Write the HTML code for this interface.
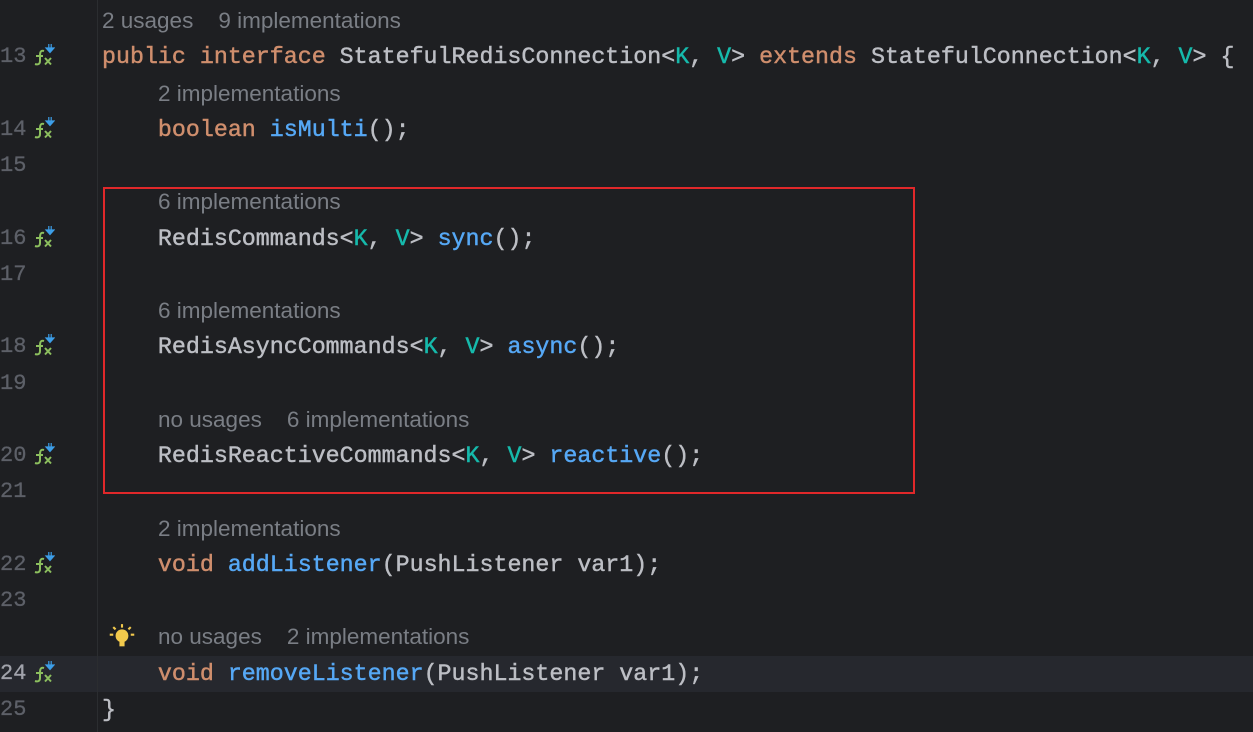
<!DOCTYPE html>
<html><head><meta charset="utf-8"><style>
html,body{margin:0;padding:0;background:#1e1f22;width:1253px;height:732px;overflow:hidden;position:relative}
.row{position:absolute;left:0;width:1253px;height:36px;line-height:36px}
.num{position:absolute;left:0;width:26px;text-align:right;font-family:"Liberation Mono",monospace;font-size:22px;color:#5d6068;-webkit-text-stroke:0.3px #5d6068}
.code{position:absolute;left:102px;font-family:"Liberation Mono",monospace;font-size:23.3px;color:#bcbec4;white-space:pre;-webkit-text-stroke:0.45px currentColor}
.hint{position:absolute;left:102px;font-family:"Liberation Sans",sans-serif;font-size:22.5px;color:#7a7e85;white-space:pre}
.k{color:#cf8e6d}.m{color:#56a8f5}.t{color:#16baac}
.fx{position:absolute;left:33px;top:5px}
.gut{position:absolute;left:97px;top:0;width:1px;height:732px;background:#2b2d30}
.cur{background:#26282e}
.box{position:absolute;left:103px;top:187px;width:808px;height:303px;border:2px solid #e0282a}
</style></head><body>
<div class="row cur" style="top:656px"></div>
<div class="gut"></div>
<svg width="0" height="0" style="position:absolute"><defs><g id="fx"><path d="M11 7 C8 6 7 8 7 11 L7 17 C7 20 5 21 2 20 M3 12 H10" stroke="#8cbf5e" stroke-width="2" fill="none"/><path d="M12 14 L18 20.5 M18 14 L12 20.5" stroke="#8cbf5e" stroke-width="2"/><path d="M13 4 H21 L17 8.5 Z M15.8 0 V5 M18.2 0 V5" fill="#3d9ee8" stroke="#3d9ee8" stroke-width="1.2"/></g></defs></svg>
<div class="row" style="top:3px"><span class="hint">2 usages    9 implementations</span></div>
<div class="row" style="top:39px"><span class="num">13</span><svg class="fx" width="22" height="24"><use href="#fx"/></svg><span class="code"><span class="k">public interface</span> StatefulRedisConnection&lt;<span class="t">K</span>, <span class="t">V</span>&gt; <span class="k">extends</span> StatefulConnection&lt;<span class="t">K</span>, <span class="t">V</span>&gt; {</span></div>
<div class="row" style="top:76px"><span class="hint" style="left:158px">2 implementations</span></div>
<div class="row" style="top:112px"><span class="num">14</span><svg class="fx" width="22" height="24"><use href="#fx"/></svg><span class="code">    <span class="k">boolean</span> <span class="m">isMulti</span>();</span></div>
<div class="row" style="top:148px"><span class="num">15</span></div>
<div class="row" style="top:184px"><span class="hint" style="left:158px">6 implementations</span></div>
<div class="row" style="top:221px"><span class="num">16</span><svg class="fx" width="22" height="24"><use href="#fx"/></svg><span class="code">    RedisCommands&lt;<span class="t">K</span>, <span class="t">V</span>&gt; <span class="m">sync</span>();</span></div>
<div class="row" style="top:257px"><span class="num">17</span></div>
<div class="row" style="top:293px"><span class="hint" style="left:158px">6 implementations</span></div>
<div class="row" style="top:329px"><span class="num">18</span><svg class="fx" width="22" height="24"><use href="#fx"/></svg><span class="code">    RedisAsyncCommands&lt;<span class="t">K</span>, <span class="t">V</span>&gt; <span class="m">async</span>();</span></div>
<div class="row" style="top:366px"><span class="num">19</span></div>
<div class="row" style="top:402px"><span class="hint" style="left:158px">no usages    6 implementations</span></div>
<div class="row" style="top:438px"><span class="num">20</span><svg class="fx" width="22" height="24"><use href="#fx"/></svg><span class="code">    RedisReactiveCommands&lt;<span class="t">K</span>, <span class="t">V</span>&gt; <span class="m">reactive</span>();</span></div>
<div class="row" style="top:474px"><span class="num">21</span></div>
<div class="row" style="top:511px"><span class="hint" style="left:158px">2 implementations</span></div>
<div class="row" style="top:547px"><span class="num">22</span><svg class="fx" width="22" height="24"><use href="#fx"/></svg><span class="code">    <span class="k">void</span> <span class="m">addListener</span>(PushListener var1);</span></div>
<div class="row" style="top:583px"><span class="num">23</span></div>
<div class="row" style="top:619px"><svg style="position:absolute;left:108px;top:4px" width="28" height="28" viewBox="0 0 24 24"><circle cx="12" cy="11" r="5.5" fill="#f2c94c"/><rect x="9.8" y="15" width="4.4" height="5" fill="#f2c94c"/><path d="M12 1v3M1.5 10h3M19.5 10h3M4.5 3.5l2 2M19.5 3.5l-2 2" stroke="#f2c94c" stroke-width="1.8"/></svg><span class="hint" style="left:158px">no usages    2 implementations</span></div>
<div class="row" style="top:656px"><span class="num" style="color:#a1a3ab;-webkit-text-stroke:0.3px #a1a3ab">24</span><svg class="fx" width="22" height="24"><use href="#fx"/></svg><span class="code">    <span class="k">void</span> <span class="m">removeListener</span>(PushListener var1);</span></div>
<div class="row" style="top:692px"><span class="num">25</span><span class="code">}</span></div>
<div class="box"></div>
</body></html>
